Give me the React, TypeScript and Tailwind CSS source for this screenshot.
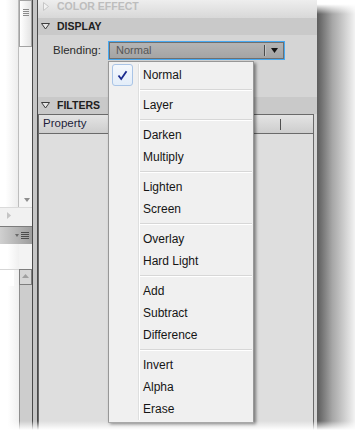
import React from 'react';

const menuGroups: string[][] = [
  ['Normal'],
  ['Layer'],
  ['Darken', 'Multiply'],
  ['Lighten', 'Screen'],
  ['Overlay', 'Hard Light'],
  ['Add', 'Subtract', 'Difference'],
  ['Invert', 'Alpha', 'Erase'],
];

const selected = 'Normal';

const Check = () => (
  <div className="w-[21px] h-[22px] rounded-[3px] border border-[#a9c4e6] bg-linear-to-b from-[#f4f8fd] to-[#e3edf9] flex items-center justify-center">
    <svg width="11" height="11" viewBox="0 0 11 11">
      <path d="M1.5 5.5 L4.2 9 L9.5 1.2" fill="none" stroke="#1b2a8e" strokeWidth="1.8" />
    </svg>
  </div>
);

const GutterLine = () => (
  <>
    <div className="w-px bg-[#dedfdf]" />
    <div className="w-px bg-white" />
  </>
);

const BlendMenu = () => (
  <div className="absolute left-[108px] top-[61px] w-[146px] h-[362px] border border-[#979797] bg-[#f0f0f0] py-[2px] shadow-[2px_2px_3px_rgba(0,0,0,0.45)] flex flex-col">
    {menuGroups.map((group, gi) => (
      <React.Fragment key={gi}>
        {gi > 0 && (
          <div className="flex h-[8px]">
            <div className="w-[29px] shrink-0" />
            <GutterLine />
            <div className="flex-1 flex flex-col justify-center pr-[1px]">
              <div className="h-px bg-[#d7d7d7]" />
              <div className="h-px bg-white" />
            </div>
          </div>
        )}
        {group.map(item => (
          <div key={item} className="flex h-[22px]">
            <div className="w-[29px] shrink-0 pl-[3px] flex items-center">
              {item === selected && <Check />}
            </div>
            <GutterLine />
            <span className="pl-[3px] flex items-center text-[12px] text-[#151515]">{item}</span>
          </div>
        ))}
      </React.Fragment>
    ))}
  </div>
);

const HeaderRow = ({ label, open }: { label: string; open: boolean }) => (
  <div className="h-[17px] bg-[#c9c9c9] flex items-center pl-[3px]">
    <div className="w-[16px] flex items-center">
      {open ? (
        <svg width="9" height="7" viewBox="0 0 9 7">
          <polygon points="0.5,0.5 8.5,0.5 4.5,6" fill="#e6e6e6" stroke="#3c3c3c" strokeWidth="1" />
        </svg>
      ) : (
        <svg width="6" height="9" viewBox="0 0 6 9" className="ml-[2px]">
          <polygon points="0.5,0.5 5.5,4.5 0.5,8.5" fill="#eeeeee" stroke="#bcbcbc" strokeWidth="1" />
        </svg>
      )}
    </div>
    <span className="text-[10.5px] font-bold text-[#202020]">{label}</span>
  </div>
);

const LeftStrip = () => (
  <div className="w-[32px] shrink-0 flex flex-col">
    <div className="h-[207px] flex">
      <div className="w-[18px] bg-linear-to-r from-white from-30% to-[#ededed]" />
      <div className="w-[14px] flex flex-col border-l border-[#bdbdbd] bg-[#f5f5f5]">
        <div className="h-[47px] border border-[#a3a3a3] bg-linear-to-r from-white to-[#e4e4e4] flex justify-center pt-[8px]">
          <svg width="6" height="8" viewBox="0 0 6 8">
            <path d="M0 0.5 H6 M0 2.5 H6 M0 4.5 H6 M0 6.5 H6" stroke="#8a8a8a" strokeWidth="1" />
          </svg>
        </div>
        <div className="flex-1" />
        <div className="flex justify-center pl-[2px] pb-[5px]">
          <svg width="6" height="4" viewBox="0 0 6 4">
            <polygon points="0,0 6,0 3,4" fill="#8e8e8e" />
          </svg>
        </div>
      </div>
    </div>
    <div className="h-[19px] border-t border-[#dadada] bg-[#f1f1f1] pl-[7px] pt-[4px]">
      <svg width="4" height="7" viewBox="0 0 4 7">
        <polygon points="0,0 4,3.5 0,7" fill="#c4c4c4" />
      </svg>
    </div>
    <div className="h-[18px] border-t border-[#7c7c7c] bg-linear-to-r from-[#d0d0d0] to-[#9d9d9d] flex items-center justify-end gap-[2px] pr-[3px]">
      <svg width="4" height="3" viewBox="0 0 4 3">
        <polygon points="0,0 4,0 2,3" fill="#6a6a6a" />
      </svg>
      <svg width="8" height="8" viewBox="0 0 8 8">
        <path d="M0 0.5 H8 M0 2.5 H8 M0 4.5 H8 M0 6.5 H8" stroke="#4c4c4c" strokeWidth="1" />
      </svg>
    </div>
    <div className="flex-1 flex">
      <div className="w-[19px] flex flex-col bg-linear-to-r from-white from-40% to-[#f0f0f0]">
        <div className="h-[25px]" />
        <div className="h-px bg-[#d6d6d6]" />
        <div className="h-[16px] mx-[5px] bg-white" />
      </div>
      <div className="w-[13px] flex flex-col">
        <div className="h-[25px] bg-[#f3f3f3]" />
        <div className="h-[16px] border border-[#7d7d7d] bg-[#d6d6d6] flex justify-center pt-[4px]">
          <svg width="7" height="4" viewBox="0 0 7 4">
            <polygon points="0,4 7,4 3.5,0" fill="#a0a0a0" />
          </svg>
        </div>
        <div className="flex-1 border-l border-[#8e8e8e] bg-[#cdcdcd]" />
      </div>
    </div>
  </div>
);

const PropertyPanel = () => (
  <div className="w-[279px] shrink-0 flex flex-col bg-[#d5d5d5]">
    <div className="h-[18px] bg-linear-to-b from-[#eeeeee] to-[#d8d8d8] flex items-start pt-[1px] pl-[3px]">
      <div className="w-[16px] pl-[2px] pt-[1px]">
        <svg width="6" height="9" viewBox="0 0 6 9">
          <polygon points="0.5,0.5 5.5,4.5 0.5,8.5" fill="#f2f2f2" stroke="#c6c6c6" strokeWidth="1" />
        </svg>
      </div>
      <span className="text-[10.5px] font-bold text-[#bdbdbd] leading-[11px]">COLOR EFFECT</span>
    </div>
    <HeaderRow label="DISPLAY" open />
    <div className="h-[62px] pt-[6px] pl-[15px]">
      <div className="flex items-center">
        <span className="w-[55px] text-[11.5px] text-[#2c2c2c]">Blending:</span>
        <div className="w-[177px] h-[19px] border border-[#46a9f2]">
          <div className="h-full border border-[#6f6f6f] bg-linear-to-b from-[#b4b4b4] to-[#a4a4a4] flex items-center pl-[6px] pr-[5px]">
            <span className="flex-1 text-[11px] text-[#565656]">Normal</span>
            <div className="w-px h-[11px] bg-[#4a4a4a]" />
            <div className="w-px h-[11px] bg-[#c4c4c4] mr-[5px]" />
            <svg width="7" height="5" viewBox="0 0 7 5">
              <polygon points="0,0 7,0 3.5,5" fill="#141414" />
            </svg>
          </div>
        </div>
      </div>
    </div>
    <HeaderRow label="FILTERS" open />
    <div className="flex-1 flex flex-col pr-[3px]">
      <div className="flex-1 flex flex-col border-x border-[#6a6a6a]">
        <div className="h-[20px] border-y border-[#6a6a6a] bg-linear-to-b from-[#e4e4e4] to-[#cdcdcd] flex items-center">
          <span className="w-[241px] pl-[4px] text-[11.5px] text-[#1d1d3a]">Property</span>
          <div className="w-px h-[11px] bg-[#505050]" />
        </div>
        <div className="flex-1 bg-[#dedede]" />
      </div>
    </div>
  </div>
);

const App: React.FC = () => {
  return (
    <div className="relative w-[360px] h-[430px] overflow-hidden bg-white flex font-['Liberation_Sans',Arial,sans-serif]">
      <LeftStrip />
      <div className="w-px shrink-0 bg-[#4a4a4a]" />
      <div className="w-[4px] shrink-0 bg-[#c6c6c6]" />
      <div className="w-px shrink-0 bg-[#4a4a4a]" />
      <PropertyPanel />
      <div className="w-[38px] shrink-0 flex flex-col bg-linear-to-r from-[#5c5c5c] via-[#a6a6a6] via-40% to-[#f3f3f3]">
        <div className="h-[14px] bg-linear-to-b from-white from-30% to-white/0" />
      </div>
      <div className="flex-1" />

      <BlendMenu />

      <div className="absolute inset-x-0 bottom-0 h-[9px] bg-linear-to-b from-white/0 to-white" />
    </div>
  );
};

export default App;
